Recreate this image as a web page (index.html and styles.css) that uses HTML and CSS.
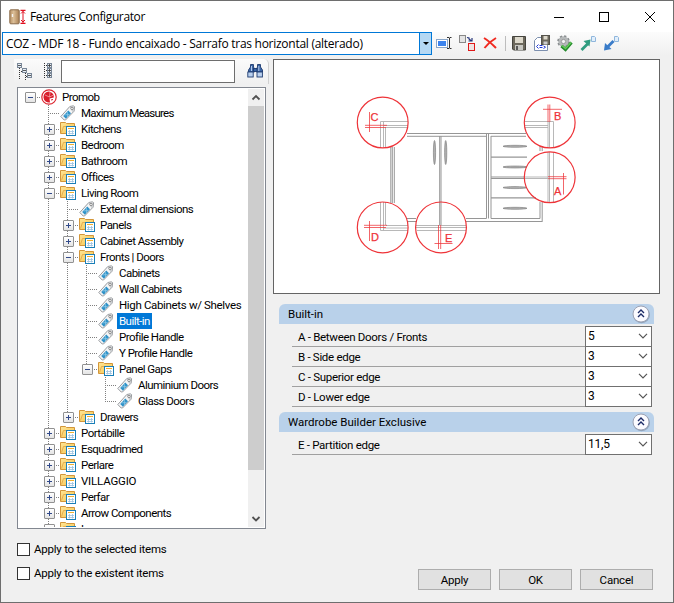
FILE: index.html
```html
<!DOCTYPE html>
<html lang="en">
<head>
<meta charset="utf-8">
<title>Features Configurator</title>
<link rel="stylesheet" href="styles.css">
</head>
<body>
<svg class="defs" width="0" height="0">
  <defs>
    <linearGradient id="gold" x1="0" y1="0" x2="1" y2="1"><stop offset="0" stop-color="#ffe596"/><stop offset="1" stop-color="#f5c44e"/></linearGradient>
    <symbol id="folder" viewBox="0 0 16 16">
      <path d="M.5 12.500V1.500H5.500L6.500 2.500H14.500V12.500Z" fill="url(#gold)" stroke="#d3963a"/>
      <path d="M1.500 11.500L3.500 5.500H13.500" fill="none" stroke="#dfa445" stroke-width=".8"/>
      <rect x="6.500" y="5.500" width="9" height="9" fill="#fff" stroke="#1a7fb8"/>
      <path d="M8 7.500H14" stroke="#f0b030"/>
      <path d="M8 10.500H14M9.500 9V13.500M12.500 9V13.500M8 12.500H14" stroke="#9cc3e0" stroke-width=".8"/>
    </symbol>
    <symbol id="tag" viewBox="0 0 16 16">
      <path d="M.8 11.500L9.800 1.500L13.600 .8L14.600 1.800L14.100 6.200L5.500 15L4.200 15Z" fill="#f4f5f6" stroke="#8c9094" stroke-width=".9"/>
      <path d="M9.800 2L13.800 1.200L13.800 6L12.300 7Z" fill="#c9ccce"/>
      <path d="M3.200 11.100L8.300 5.600L11 8.300L5.900 13.700Z" fill="#2f92c8"/>
      <path d="M4.500 10L9.300 9.300M7.300 7L7.500 12" stroke="#8cc8e6" stroke-width=".8"/>
      <circle cx="12" cy="3.500" r="1.200" fill="#fff" stroke="#777" stroke-width=".8"/>
    </symbol>
    <symbol id="collapse" viewBox="0 0 20 20">
      <circle cx="10.500" cy="10.800" r="8.500" fill="#7f91aa" opacity=".7"/>
      <circle cx="10" cy="10" r="8" fill="#fbfbff" stroke="#9da3b4"/>
      <path d="M7 9L10 6L13 9M7 13L10 10L13 13" fill="none" stroke="#1c2b66" stroke-width="1.400"/>
    </symbol>
    <symbol id="chev" viewBox="0 0 10 6"><path d="M1 .8L5 4.800L9 .8" fill="none" stroke="#555" stroke-width="1.200"/></symbol>
  </defs>
</svg>
<div class="window">
  <header class="titlebar">
    <svg class="app-icon" width="18" height="16" viewBox="0 0 18 16">
      <defs><linearGradient id="wood"><stop offset="0" stop-color="#b99468"/><stop offset=".4" stop-color="#dcbf98"/><stop offset="1" stop-color="#aa8155"/></linearGradient></defs>
      <rect x=".8" y=".8" width="9.400" height="14" rx="1" fill="url(#wood)" stroke="#8a6b4b"/>
      <path d="M3.500 5V8" stroke="#f4f4f4" stroke-width="1.400"/>
      <path d="M11.500 1.300H16.500M11.500 14.300H16.500" stroke="#e01020" stroke-width="1.300"/>
      <path d="M14 2V14M12 4.500L14 2.500L16 4.500M12 11L14 13L16 11" fill="none" stroke="#e01020"/>
    </svg>
    <h1>Features Configurator</h1>
    <svg class="caption" width="110" height="14" viewBox="0 0 110 14" fill="none" stroke="#000">
      <path d="M1 7.500H11"/><rect x="46.500" y="2.500" width="9" height="9"/><path d="M92 2L102 12M102 2L92 12"/>
    </svg>
  </header>

  <div class="toolbar">
    <div class="combo"><span>COZ - MDF 18 - Fundo encaixado - Sarrafo tras horizontal (alterado)</span><b></b></div>
    <svg class="tools" width="190" height="20" viewBox="434 33 190 20">
      <rect x="436.500" y="39.500" width="11" height="8" fill="#fff" stroke="#8aa6c8"/><rect x="438" y="41" width="8" height="5" fill="#3b83ee"/>
      <path d="M449.500 38V48M447 37.500H449L449.500 38L450 37.500H451.500M447 48.500H449L449.500 48L450 48.500H451.500" fill="none" stroke="#333"/>
      <rect x="459.500" y="35.500" width="6" height="7" fill="#e4e4e4" stroke="#888"/><path d="M467 37.500L469 38V39L471.500 41M468.500 41H472V38" fill="none" stroke="#25357a" stroke-width="1.200"/><rect x="468.500" y="43.500" width="6" height="7" fill="#efe3e3" stroke="#e01818"/>
      <path d="M484 38Q489 41 496 48M496 38Q489 42 484.500 48" fill="none" stroke="#f02a20" stroke-width="2"/>
      <path d="M505.500 36V51" stroke="#bdbdbd"/>
      <path d="M512.500 36.500H525.500V50H513.500L512.500 49Z" fill="#6c685c" stroke="#45443e"/><rect x="515" y="37" width="8" height="6" fill="#ddd9cc"/><rect x="515" y="45" width="8" height="5" fill="#c7c7c2"/><path d="M517 46V50" stroke="#333" stroke-width="1.500"/>
      <path d="M534.500 50.500V40.500L537.500 37.500H547.500V50.500Z" fill="#fff" stroke="#7c8fae"/>
      <rect x="541.500" y="35.500" width="8" height="9" fill="#6c685c" stroke="#55534b"/><rect x="543.500" y="36" width="4" height="3.500" fill="#ddd9cc"/><rect x="543.500" y="41.500" width="4" height="3" fill="#ccc"/>
      <path d="M538.500 44.500L536.500 46.500L538.500 48.500M543.500 46L545.500 47.200L543.500 48.500M539.500 45.500H542.500M539.500 47.500H542.500" stroke="#2038d8" fill="none"/>
      <circle cx="563.500" cy="41.500" r="5.300" fill="#b9bcbd" stroke="#8a8e90" stroke-width="2" stroke-dasharray="2.200 1.960"/><circle cx="563.500" cy="41.500" r="4.800" fill="#b6b9ba"/><circle cx="563.500" cy="41.500" r="2.100" fill="#f4f4f4" stroke="#888" stroke-width=".7"/>
      <path d="M561.500 46L565.500 49.500L571.500 42.500" fill="none" stroke="#258a2d" stroke-width="3.200"/><path d="M561.800 45.500L565.500 48.500L571 42.500" fill="none" stroke="#65cc58" stroke-width="1.400"/>
      <path d="M581.500 50L588 43.500" stroke="#2f9c80" stroke-width="2.800"/><path d="M583.500 41L590.500 39.500L589.500 46.500Z" fill="#2f9c80"/>
      <path d="M605 43L604 50.500L611.500 49Z" fill="#3a7cc9"/><path d="M606.500 48L613.500 41" stroke="#3a7cc9" stroke-width="2.800"/>
      <path d="M591.500 36.500H594.500L595.500 37.500V41.500H591.500ZM614.500 36.500H617.500L618.500 37.500V41.500H614.500Z" fill="#e2effc" stroke="#8fb6dc"/>
    </svg>
  </div>

  <main class="content">
    <section class="left">
      <div class="searchbar">
        <svg width="44" height="24" viewBox="14 59 44 24">
          <g fill="none" stroke="#333" stroke-dasharray="1 1"><path d="M19.500 68V80M21 71.500H23M25.500 73V80M26 76.500H28M44.500 63V79M46 65.500H48M46 70.500H48M46 75.500H48"/></g>
          <g fill="#e6edf5" stroke="#7a8797"><rect x="17.500" y="63.500" width="4" height="4"/><rect x="22.500" y="68.500" width="4" height="4"/><rect x="27.500" y="73.500" width="4" height="4"/><rect x="47.500" y="63.500" width="4" height="4"/><rect x="47.500" y="68.500" width="4" height="4"/><rect x="47.500" y="73.500" width="4" height="4"/></g>
          <path d="M18 65.500H21M23 70.500H26M28 75.500H31M48 65.500H51M48 70.500H51M48 75.500H51M49.500 64V67M49.500 69V72M49.500 74V77" stroke="#333" stroke-width=".8"/>
        </svg>
        <input type="text" aria-label="Search">
        <svg class="find" width="24" height="24" viewBox="240 59 24 24">
          <g fill="#3c66a6" stroke="#1f3c70" stroke-width=".9">
            <path d="M250.500 64.500H253.500V67L254.500 69V72H248.500V70L250.500 67ZM257.500 64.500H260.500V67L262.500 70V72H256.500V69L257.500 67Z"/>
            <rect x="247.800" y="72" width="5.400" height="5" fill="#b9cfee"/><rect x="257" y="72" width="5.400" height="5" fill="#b9cfee"/>
            <rect x="253.500" y="68.500" width="3.500" height="3"/>
          </g>
          <path d="M251.500 66V71M258.800 66V71" stroke="#b4cbed"/>
        </svg>
      </div>
      <div class="treebox">
        <ul class="tree">
          <li><div class="row"><i class="box minus"></i><svg class="icon" viewBox="0 0 16 16"><circle cx="8" cy="8" r="7.200" fill="#fff" stroke="#dc2630" stroke-width="1.200"/><path d="M8 2.500A5.500 5.500 0 1 0 9 13.400L8.500 9.500L12.800 8.500A5.500 5.500 0 0 0 8 2.500Z" fill="#d81e2c"/><path d="M9 3L8.500 8L4 6M8.500 8L12.500 6" stroke="#f6b4b8" stroke-width=".7" fill="none"/><path d="M10 11L12 10.500" stroke="#d81e2c"/></svg><span>Promob</span></div>
            <ul>
              <li><div class="row tight"><i></i><svg class="icon"><use href="#tag"/></svg><span>Maximum Measures</span></div></li>
              <li><div class="row"><i class="box plus"></i><svg class="icon"><use href="#folder"/></svg><span>Kitchens</span></div></li>
              <li><div class="row"><i class="box plus"></i><svg class="icon"><use href="#folder"/></svg><span>Bedroom</span></div></li>
              <li><div class="row"><i class="box plus"></i><svg class="icon"><use href="#folder"/></svg><span>Bathroom</span></div></li>
              <li><div class="row"><i class="box plus"></i><svg class="icon"><use href="#folder"/></svg><span>Offices</span></div></li>
              <li><div class="row"><i class="box minus"></i><svg class="icon"><use href="#folder"/></svg><span>Living Room</span></div>
                <ul>
                  <li><div class="row"><i></i><svg class="icon"><use href="#tag"/></svg><span>External dimensions</span></div></li>
                  <li><div class="row"><i class="box plus"></i><svg class="icon"><use href="#folder"/></svg><span>Panels</span></div></li>
                  <li><div class="row"><i class="box plus"></i><svg class="icon"><use href="#folder"/></svg><span>Cabinet Assembly</span></div></li>
                  <li><div class="row"><i class="box minus"></i><svg class="icon"><use href="#folder"/></svg><span>Fronts | Doors</span></div>
                    <ul>
                      <li><div class="row"><i></i><svg class="icon"><use href="#tag"/></svg><span>Cabinets</span></div></li>
                      <li><div class="row"><i></i><svg class="icon"><use href="#tag"/></svg><span>Wall Cabinets</span></div></li>
                      <li><div class="row wide"><i></i><svg class="icon"><use href="#tag"/></svg><span>High Cabinets w/ Shelves</span></div></li>
                      <li><div class="row selected"><i></i><svg class="icon"><use href="#tag"/></svg><span>Built-in</span></div></li>
                      <li><div class="row"><i></i><svg class="icon"><use href="#tag"/></svg><span>Profile Handle</span></div></li>
                      <li><div class="row"><i></i><svg class="icon"><use href="#tag"/></svg><span>Y Profile Handle</span></div></li>
                      <li><div class="row"><i class="box minus"></i><svg class="icon"><use href="#folder"/></svg><span>Panel Gaps</span></div>
                        <ul>
                          <li><div class="row"><i></i><svg class="icon"><use href="#tag"/></svg><span>Aluminium Doors</span></div></li>
                          <li><div class="row"><i></i><svg class="icon"><use href="#tag"/></svg><span>Glass Doors</span></div></li>
                        </ul>
                      </li>
                    </ul>
                  </li>
                  <li><div class="row"><i class="box plus"></i><svg class="icon"><use href="#folder"/></svg><span>Drawers</span></div></li>
                </ul>
              </li>
              <li><div class="row"><i class="box plus"></i><svg class="icon"><use href="#folder"/></svg><span>Portábille</span></div></li>
              <li><div class="row"><i class="box plus"></i><svg class="icon"><use href="#folder"/></svg><span>Esquadrimed</span></div></li>
              <li><div class="row"><i class="box plus"></i><svg class="icon"><use href="#folder"/></svg><span>Perlare</span></div></li>
              <li><div class="row loose"><i class="box plus"></i><svg class="icon"><use href="#folder"/></svg><span>VILLAGGIO</span></div></li>
              <li><div class="row"><i class="box plus"></i><svg class="icon"><use href="#folder"/></svg><span>Perfar</span></div></li>
              <li><div class="row"><i class="box plus"></i><svg class="icon"><use href="#folder"/></svg><span>Arrow Components</span></div></li>
              <li><div class="row"><i class="box plus"></i><svg class="icon"><use href="#folder"/></svg><span>L</span></div></li>
            </ul>
          </li>
        </ul>
        <div class="scroll">
          <svg width="16" height="17" viewBox="0 0 16 17"><path d="M4.500 10.500L8 7L11.500 10.500" fill="none" stroke="#505050" stroke-width="1.800"/></svg>
          <div class="thumb"></div>
          <svg width="16" height="17" viewBox="0 0 16 17"><path d="M4.500 7L8 10.500L11.500 7" fill="none" stroke="#505050" stroke-width="1.800"/></svg>
        </div>
      </div>
      <label class="check"><i></i><span>Apply to the selected items</span></label>
      <label class="check"><i></i><span>Apply to the existent items</span></label>
    </section>

    <section class="right">
      <div class="preview">
        <svg width="385" height="233" viewBox="274 60 385 233" fill="none">
          <g stroke="#969696" stroke-width="1">
            <path d="M407 133.500H526M407 136.300H486M491 136.300H526M390.800 147V203M392.300 147V203M394.300 147V203M407 218.500H416M466 218.500H486.500M491 218.500H540M407 221.500H417M466 221.500H542.500"/>
            <path d="M439.700 136V225M441 136V225M486.500 133.500V218.500M488.500 133.500V218.500M491 136V218.500M540 146V151M542.200 146V151M540 202V218.500M542.200 202V221.500"/>
            <path d="M491 157.200H527M491 177H525M491 178.500H525M491 197.800H536" stroke-width="1.200"/>
          </g>
          <g fill="#b0b0b0" stroke="#757575" stroke-width=".6">
            <ellipse cx="434.500" cy="152.500" rx="1.100" ry="12"/><ellipse cx="445.700" cy="152.500" rx="1.100" ry="12"/>
            <ellipse cx="515" cy="146.300" rx="12" ry="1"/><ellipse cx="515" cy="167" rx="12" ry="1"/><ellipse cx="515" cy="187.600" rx="12" ry="1"/><ellipse cx="515" cy="208.300" rx="12" ry="1"/>
          </g>
          <g stroke="#b0b0b0" stroke-width=".9">
            <path d="M380.500 147V121.500H408M384 125.500H408M386 127.500H407M383.500 121.500V147.500M385.500 127V147.500"/>
            <path d="M380.500 202V230.500H408M383.500 202V230.500M385.500 202V225M386 225.500H408M384 228H408"/>
            <path d="M416 225.500H466M416 227.500H466M417 230.500H466"/>
            <path d="M525 121.500H553.500V147M524.500 125.500H548M525 127.500H548M548 121.500V148M549.500 121.500V148"/>
            <path d="M548 152V202.500M549.500 152V202.500M553.500 152V202M525 177H548M525 178.500H548"/>
          </g>
          <g stroke="#ee3338">
            <g stroke-width="1.200"><circle cx="382.700" cy="122.500" r="25.400"/><circle cx="382.700" cy="227.400" r="25.400"/><circle cx="441" cy="227.400" r="25.400"/><circle cx="549.700" cy="122.500" r="25.400"/><circle cx="549.700" cy="177.300" r="25.400"/></g>
            <path stroke-width=".75" d="M369.500 112V132M365 125.300H387M365 127.500H386M369.500 221V241M364 225.300H387M364 227.500H386M438.500 225V249M440.700 225V249M434.500 243.500H452.500M548 104.500V122M549.800 104.500V122M543 109.300H562M548 176.700H566.500M548 178.700H566.500M563.500 173V194.500"/>
          </g>
          <g class="letters"><text x="370.500" y="120.500">C</text><text x="371" y="240.500">D</text><text x="445" y="242">E</text><text x="554" y="119.500">B</text><text x="554" y="194.500">A</text></g>
        </svg>
      </div>
      <div class="group">
        <h2>Built-in<svg width="20" height="20"><use href="#collapse"/></svg></h2>
        <div class="fields">
          <div class="field"><label>A - Between Doors / Fronts</label><div class="select">5<svg width="10" height="6"><use href="#chev"/></svg></div></div>
          <div class="field"><label>B - Side edge</label><div class="select">3<svg width="10" height="6"><use href="#chev"/></svg></div></div>
          <div class="field"><label>C - Superior edge</label><div class="select">3<svg width="10" height="6"><use href="#chev"/></svg></div></div>
          <div class="field"><label>D - Lower edge</label><div class="select">3<svg width="10" height="6"><use href="#chev"/></svg></div></div>
        </div>
      </div>
      <div class="group">
        <h2>Wardrobe Builder Exclusive<svg width="20" height="20"><use href="#collapse"/></svg></h2>
        <div class="fields">
          <div class="field"><label>E - Partition edge</label><div class="select">11,5<svg width="10" height="6"><use href="#chev"/></svg></div></div>
        </div>
      </div>
      <footer><button>Apply</button><button>OK</button><button>Cancel</button></footer>
    </section>
  </main>
</div>
</body>
</html>
```
FILE: styles.css
```css
* { box-sizing: border-box; }
body { margin: 0; font: 11.5px/16px Roboto, "Liberation Sans", sans-serif; letter-spacing: -.22px; color: #000; }
svg { display: block; flex: none; }
.defs { position: absolute; }
h1, h2, ul { margin: 0; padding: 0; font-weight: normal; }
.window { width: 674px; height: 603px; border: 1px solid #6e6e6e; background: #f0f0f0; display: flex; flex-direction: column; overflow: hidden; }

.titlebar { height: 31px; background: #fff; display: flex; align-items: center; padding: 0 10px 0 8px; flex: none; }
.titlebar h1 { font: 12px/16px "Open Sans", sans-serif; letter-spacing: -.37px; margin-left: 3px; flex: 1; }

.toolbar { height: 24px; display: flex; padding-left: 1px; background: linear-gradient(#fcfcfc, #f0f0f0); flex: none; }
.combo { width: 430px; height: 23px; border: 1px solid #0078d7; background: #fff; display: flex; justify-content: space-between; font: 12px/21px "Open Sans", sans-serif; letter-spacing: -.27px; padding-left: 3px; white-space: nowrap; }
.combo b { width: 12px; background: #b5d8f3; border-left: 1px solid #0078d7; display: grid; place-items: center; }
.combo b::before { content: ""; border: 3px solid transparent; border-top-color: #000; border-bottom: 0; }
.tools { margin: 1px 0 0 2px; }

.content { flex: 1; display: flex; min-height: 0; padding-top: 3px; }
.left { width: 272px; padding-left: 13px; flex: none; }
.searchbar { display: flex; height: 25px; width: 255px; background: linear-gradient(#fbfbfb, #f0f0f0); border-right: 1px solid #d0d0d0; border-top-right-radius: 5px; }
.searchbar input { width: 174px; height: 23px; margin: 1px 0 0 3px; border: 1px solid #6e6e6e; background: #fff; padding: 0; }
.find { margin-left: 5px; }

.treebox { margin: 3px 0 14px 3px; width: 249px; height: 442px; border: 1px solid #828790; background: #fff; padding: 1px; display: flex; overflow: hidden; }
.tree { flex: 1; padding-left: 2px; overflow: hidden; }
.tree ul { margin-left: 19px; }
.tree li { list-style: none; position: relative; }
.tree ul > li::before { content: ""; position: absolute; left: 8px; top: 0; bottom: 0; width: 1px; background: repeating-linear-gradient(#808080 0 1px, transparent 1px 2px); }
.tree ul > li:last-child::before { bottom: auto; height: 9px; }
.row { display: flex; height: 16px; align-items: center; white-space: nowrap; position: relative; letter-spacing: -.55px; }
.row.tight { letter-spacing: -.75px; }
.row.wide { letter-spacing: -.34px; }
.row.loose { letter-spacing: -.2px; }
.row > i { width: 12px; height: 1px; margin-left: 8px; background: repeating-linear-gradient(90deg, #808080 0 1px, transparent 1px 2px); display: flex; align-items: center; flex: none; }
.box::before { content: ""; width: 9px; height: 9px; margin-left: -4px; border: 1px solid #919191; border-radius: 1px; flex: none; background: linear-gradient(#324a8a, #324a8a) center / 5px 1px no-repeat, linear-gradient(#fff, #e4e4e4); }
.plus::before { background: linear-gradient(#324a8a, #324a8a) center / 5px 1px no-repeat, linear-gradient(#324a8a, #324a8a) center / 1px 5px no-repeat, linear-gradient(#fff, #e4e4e4); }
.icon { width: 16px; height: 16px; }
.row span { margin-left: 3px; padding: 1px 2px 0; line-height: 15px; }
.selected span { background: #0078d7; color: #fff; }
.scroll { width: 16px; background: #f0f0f0; display: flex; flex-direction: column; flex: none; }
.scroll .thumb { height: 364px; background: #cdcdcd; margin-bottom: auto; }

.check { display: flex; align-items: center; height: 13px; margin: 0 0 11px 3px; }
.check i { width: 13px; height: 13px; border: 1px solid #333; background: #fff; margin-right: 4px; }
.check span { line-height: 15px; }

.right { width: 388px; display: flex; flex-direction: column; }
.preview { width: 387px; height: 235px; border: 1px solid #646464; background: #fff; flex: none; margin-bottom: 10px; }
.letters { font: 11px "Liberation Sans", sans-serif; fill: #ee3338; stroke: #ee3338; stroke-width: .25px; }
.group { margin: 0 5px 6px 6px; }
.group h2 { height: 20px; width: 375px; background: #b9d1ea; border-radius: 6px 6px 0 0; font-size: 11.5px; letter-spacing: 0; line-height: 20px; padding: 0 3px 0 9px; display: flex; justify-content: space-between; }
.fields { margin: 2px 0 0 13px; width: 360px; }
.field { display: flex; height: 20px; }
.field label { flex: 1; border-bottom: 1px solid #a0a0a0; height: 21px; line-height: 22px; padding-left: 6px; letter-spacing: -.3px; }
.select { width: 67px; height: 21px; border: 1px solid #707070; background: #fff; display: flex; align-items: center; justify-content: space-between; padding: 0 3px 1px 2px; font-size: 12px; }
footer { margin: auto 8px 12px auto; display: flex; gap: 8px; }
footer button { width: 73px; height: 21px; border: 1px solid #adadad; background: #e1e1e1; font: inherit; letter-spacing: -.2px; padding: 0; }
```
